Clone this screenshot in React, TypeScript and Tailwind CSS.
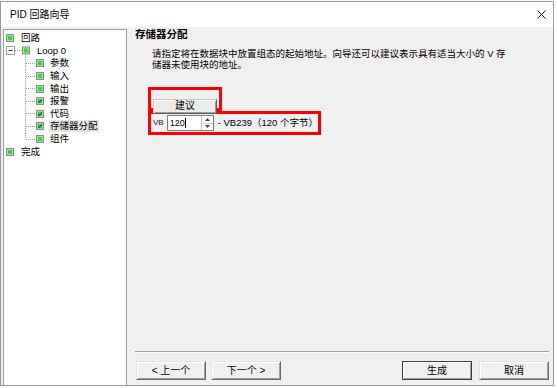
import React from "react";

const FONT = { fontFamily: '"Liberation Sans", "Noto Sans CJK SC", sans-serif' };

// small green tree checkbox
function Box({ checked = false }: { checked?: boolean }) {
  return (
    <svg width="8" height="8" viewBox="0 0 8 8" className="shrink-0">
      <rect x="0.5" y="0.5" width="7" height="7" fill="#3fd23f" stroke="#8c8c8c" />
      <rect x="1.5" y="1.5" width="5" height="5" fill="none" stroke="#98e698" />
      {checked && <polyline points="2,4 3.4,5.6 6,2.4" fill="none" stroke="#16705a" strokeWidth="1.3" />}
    </svg>
  );
}

function Child({ label, checked, last, selected }: { label: string; checked?: boolean; last?: boolean; selected?: boolean }) {
  return (
    <div className="flex items-center h-[12.6px]">
      <span className="w-[21px] shrink-0" />
      <svg width="11" height="13" viewBox="0 0 11 13" className="shrink-0">
        <line x1="0.5" y1="0" x2="0.5" y2={last ? 6.5 : 13} stroke="#a0a0a0" strokeDasharray="1 1" />
        <line x1="1" y1="6.5" x2="11" y2="6.5" stroke="#a0a0a0" strokeDasharray="1 1" />
      </svg>
      <Box checked={checked} />
      <span className={`ml-[5px] px-[1px] leading-[12px] ${selected ? "bg-[#e4e4e4]" : ""}`}>{label}</span>
    </div>
  );
}

function ClassicButton({ label, w = "w-[70px]", isDefault = false }: { label: string; w?: string; isDefault?: boolean }) {
  return (
    <button
      className={`${w} h-[19px] bg-[#f0f0f0] text-[10px] leading-none text-black border ${
        isDefault
          ? "border-[#3c3c3c]"
          : "border-t-[#e3e3e3] border-l-[#e3e3e3] border-r-[#696969] border-b-[#696969]"
      } shadow-[inset_1px_1px_0_#ffffff,inset_-1px_-1px_0_#a0a0a0]`}
    >
      {label}
    </button>
  );
}

export default function App() {
  const children = [
    { label: "参数" },
    { label: "输入" },
    { label: "输出" },
    { label: "报警", checked: true },
    { label: "代码", checked: true },
    { label: "存储器分配", checked: true, selected: true },
    { label: "组件", last: true },
  ];

  return (
    <div className="w-[557px] h-[388px] bg-white pt-[1px] text-black" style={FONT}>
      <div className="w-[554px] h-[385px] border border-[#9a9a9a] flex flex-col">
        {/* title bar */}
        <div className="h-[25px] shrink-0 bg-white flex items-center justify-between pl-[9px] pr-[6px]">
          <span className="text-[10px]">PID 回路向导</span>
          <svg width="9" height="9" viewBox="0 0 9 9" className="mr-[1px]">
            <line x1="0.5" y1="0.5" x2="8.5" y2="8.5" stroke="#111" strokeWidth="1" />
            <line x1="8.5" y1="0.5" x2="0.5" y2="8.5" stroke="#111" strokeWidth="1" />
          </svg>
        </div>

        <div className="flex-1 min-h-0 bg-[#f0f0f0] flex">
          {/* tree */}
          <div className="ml-[2px] mt-[2px] w-[124px] bg-white border border-[#a0a0a0] border-b-0 pt-[2px] text-[9.5px] shrink-0">
            <div className="flex items-center h-[12.6px]">
              <span className="w-[2px] shrink-0" />
              <Box />
              <span className="ml-[7px]">回路</span>
            </div>
            <div className="flex items-center h-[12.6px]">
              <span className="w-[2px] shrink-0" />
              <svg width="28" height="13" viewBox="0 0 28 13" className="shrink-0 overflow-visible">
                <rect x="0.5" y="2.5" width="8" height="8" fill="#fff" stroke="#a0a0a0" />
                <line x1="2.5" y1="6.5" x2="6.5" y2="6.5" stroke="#333" />
                <line x1="9" y1="6.5" x2="16" y2="6.5" stroke="#a0a0a0" strokeDasharray="1 1" />
                <line x1="19.5" y1="10.5" x2="19.5" y2="13" stroke="#a0a0a0" strokeDasharray="1 1" />
                <g transform="translate(16,2.5)">
                  <rect x="0.5" y="0.5" width="7" height="7" fill="#3fd23f" stroke="#8c8c8c" />
                  <rect x="1.5" y="1.5" width="5" height="5" fill="none" stroke="#98e698" />
                </g>
              </svg>
              <span className="ml-[3px]">Loop 0</span>
            </div>
            {children.map((c) => (
              <Child key={c.label} {...c} />
            ))}
            <div className="flex items-center h-[12.6px]">
              <span className="w-[2px] shrink-0" />
              <Box />
              <span className="ml-[7px]">完成</span>
            </div>
          </div>

          {/* right pane */}
          <div className="flex-1 flex flex-col pl-[8px] pr-[4px]">
            <div className="flex-1">
              <div className="h-[14px] leading-[14px] text-[10.5px] font-bold">存储器分配</div>
              <div className="mt-[7px] pl-[17px] text-[9.5px] leading-[11px] whitespace-nowrap">
                <div>请指定将在数据块中放置组态的起始地址。向导还可以建议表示具有适当大小的 V 存</div>
                <div>储器未使用块的地址。</div>
              </div>

              <div className="ml-[13px] mt-[17px]">
                <div className="w-[74px] h-[24px] border-[3px] border-[#ff0000] p-[2px]">
                  <button className="w-[64px] h-[15px] bg-[#ebebeb] text-[10px] leading-none border border-t-[#c8c8c8] border-l-[#c8c8c8] border-r-[#5a5a5a] border-b-[#5a5a5a] shadow-[inset_1px_1px_0_#ffffff,inset_-1px_-1px_0_#a0a0a0]">
                    建议
                  </button>
                </div>
                <div className="w-[173px] h-[24px] border-[3px] border-[#ff0000] flex items-center pl-[2px] text-[9.5px]">
                  <span className="text-[8px] text-[#222]">VB</span>
                  <div className="ml-[3px] w-[57px] h-[16px] bg-white border border-[#7a7a7a] flex items-center">
                    <span className="ml-[2px] text-[9px] leading-none">120</span>
                    <span className="w-[1px] h-[10px] bg-black" />
                    <div className="ml-auto w-[12px] h-full border-l border-[#c8c8c8] flex flex-col">
                      <div className="flex-1 flex items-center justify-center border-b border-[#d0d0d0]">
                        <svg width="5" height="3" viewBox="0 0 5 3">
                          <polygon points="0,3 2.5,0 5,3" fill="#444" />
                        </svg>
                      </div>
                      <div className="flex-1 flex items-center justify-center">
                        <svg width="5" height="3" viewBox="0 0 5 3">
                          <polygon points="0,0 5,0 2.5,3" fill="#444" />
                        </svg>
                      </div>
                    </div>
                  </div>
                  <span className="ml-[4px] whitespace-nowrap">- VB239（120 个字节）</span>
                </div>
              </div>
            </div>

            {/* etched separator */}
            <div className="h-[2px] border-t border-[#a0a0a0] border-b border-b-white" />

            <div className="mt-[8px] mb-[5px] flex items-center pl-[1px]">
              <ClassicButton label="< 上一个" />
              <span className="w-[5px]" />
              <ClassicButton label="下一个 >" />
              <span className="flex-1" />
              <ClassicButton label="生成" isDefault />
              <span className="w-[7px]" />
              <ClassicButton label="取消" />
            </div>
          </div>
        </div>
      </div>
    </div>
  );
}
